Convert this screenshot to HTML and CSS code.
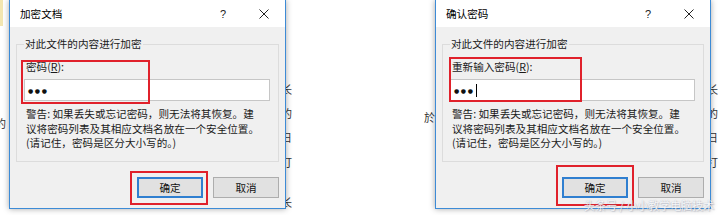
FILE: index.html
```html
<!DOCTYPE html>
<html lang="zh-CN">
<head>
<meta charset="utf-8">
<title>加密文档</title>
<link rel="stylesheet" href="styles.css">
</head>
<body>
<div class="page">
  <div class="yellow"></div>
  <span class="bgch c-left">的</span>
  <div class="bgcol col1"><span>长</span><span>的</span><span>日</span><span>打</span><span>长</span></div>
  <span class="bgch c-mid">於</span>
  <div class="bgcol col2"><span>长</span><span>的</span><span>日</span><span>打</span></div>

  <div class="dialog">
    <div class="titlebar">
      <span class="title">加密文档</span>
      <span class="help">?</span>
      <svg class="close" width="10" height="10" viewBox="0 0 10 10"><path d="M0.5 0.5 L9.5 9.5 M9.5 0.5 L0.5 9.5" stroke="#222" stroke-width="1" fill="none"/></svg>
    </div>
    <div class="body">
      <fieldset class="group">
        <legend>对此文件的内容进行加密</legend>
        <label class="lbl">密码(<u>R</u>):</label>
        <div class="input"><span class="dots">●●●</span></div>
        <p class="warn">警告: 如果丢失或忘记密码，则无法将其恢复。建<br>议将密码列表及其相应文档名放在一个安全位置。<br>(请记住，密码是区分大小写的。)</p>
      </fieldset>
      <div class="buttons">
        <div class="btn primary">确定</div>
        <div class="btn">取消</div>
      </div>
    </div>
    <div class="redbox a1"></div>
    <div class="redbox b1"></div>
  </div>

  <div class="dialog d2">
    <div class="titlebar">
      <span class="title">确认密码</span>
      <span class="help">?</span>
      <svg class="close" width="10" height="10" viewBox="0 0 10 10"><path d="M0.5 0.5 L9.5 9.5 M9.5 0.5 L0.5 9.5" stroke="#222" stroke-width="1" fill="none"/></svg>
    </div>
    <div class="body">
      <fieldset class="group">
        <legend>对此文件的内容进行加密</legend>
        <label class="lbl">重新输入密码(<u>R</u>):</label>
        <div class="input"><span class="dots">●●●</span><span class="caret"></span></div>
        <p class="warn">警告: 如果丢失或忘记密码，则无法将其恢复。建<br>议将密码列表及其相应文档名放在一个安全位置。<br>(请记住，密码是区分大小写的。)</p>
      </fieldset>
      <div class="buttons">
        <div class="btn primary">确定</div>
        <div class="btn">取消</div>
      </div>
    </div>
    <div class="redbox a2"></div>
    <div class="redbox b2"></div>
    <div class="watermark">头条号 / 小小教学电脑技术</div>
  </div>
</div>
</body>
</html>
```

FILE: styles.css
```css
* { box-sizing: border-box; }
html, body { margin: 0; padding: 0; background: #fff; }
body {
  width: 720px;
  height: 215px;
  overflow: hidden;
  font-family: "Noto Sans CJK SC", "Noto Sans", sans-serif;
  font-size: 10.6px;
  color: #1a1a1a;
}
.page {
  position: relative;
  display: flex;
  gap: 149px;
  padding-left: 9px;
  height: 215px;
}
.yellow {
  position: absolute;
  left: 0; top: 0;
  width: 3px; height: 26px;
  background: #f3e6b0;
}
.bgch {
  position: absolute;
  font-size: 11px;
  line-height: 14px;
  color: #333;
}
.c-left { left: -5px; top: 116px; }
.c-mid { left: 424px; top: 110px; }
.bgcol {
  position: absolute;
  top: 82px;
  display: flex;
  flex-direction: column;
  font-size: 11px;
  line-height: 14px;
  color: #333;
}
.bgcol span:nth-child(2) { margin-top: 10px; }
.bgcol span:nth-child(3) { margin-top: 10px; }
.bgcol span:nth-child(4) { margin-top: 11px; }
.bgcol span:nth-child(5) { margin-top: 26px; }
.col1 { left: 281px; }
.col2 { left: 707px; }

.dialog {
  position: relative;
  z-index: 1;
  width: 277px;
  height: 209px;
  border: 1px solid #3d8bd6;
  border-top: none;
  background: #f0f0f0;
  box-shadow: 0 0 6px rgba(0,0,0,0.35);
  display: flex;
  flex-direction: column;
}
.d2 { width: 276px; }
.titlebar {
  height: 27px;
  background: #fff;
  display: flex;
  align-items: center;
  padding-left: 10px;
  padding-right: 16px;
  flex: none;
}
.title { color: #000; line-height: 14px; }
.help {
  margin-left: auto;
  margin-right: 33px;
  font-family: "Liberation Sans", sans-serif;
  font-size: 11px;
  color: #222;
}
.close { display: block; }

.body {
  padding: 10px 6px 0 6px;
  display: flex;
  flex-direction: column;
}
.group {
  margin: 0;
  border: 1px solid #dcdcdc;
  padding: 0 8px 10px 7px;
  min-width: 0;
}
.group legend {
  padding: 0 1px;
  line-height: 14px;
  color: #1a1a1a;
}
.lbl {
  display: block;
  margin: 9px 0 0 2px;
  line-height: 14px;
}
.lbl u { text-decoration: underline; text-underline-offset: 1px; }
.input {
  margin-top: 5px;
  height: 22px;
  background: #fff;
  border: 1px solid #c6c6c6;
  display: flex;
  align-items: center;
  padding-left: 3px;
}
.dots {
  font-family: "DejaVu Sans", sans-serif;
  font-size: 6px;
  letter-spacing: 1.6px;
  color: #111;
}
.caret {
  width: 1px;
  height: 13px;
  background: #000;
  margin-left: 1px;
}
.warn {
  margin: 6px 0 0 2px;
  line-height: 14.5px;
  color: #1a1a1a;
  white-space: nowrap;
}
.buttons {
  margin-top: 15px;
  display: flex;
  justify-content: flex-end;
  gap: 10px;
}
.btn {
  width: 66px;
  height: 21px;
  border: 1px solid #adadad;
  background: #e1e1e1;
  display: flex;
  align-items: center;
  justify-content: center;
  color: #111;
}
.btn.primary {
  border: 2px solid #2f7fd0;
}

.redbox {
  position: absolute;
  border: 2px solid #e0212b;
}
.a1 { left: 11px; top: 60px; width: 129px; height: 44px; }
.b1 { left: 120px; top: 171px; width: 78px; height: 34px; }
.a2 { left: 13px; top: 57px; width: 133px; height: 45px; }
.b2 { left: 120px; top: 165px; width: 78px; height: 41px; }

.watermark {
  position: absolute;
  left: 148px;
  top: 198px;
  font-size: 11px;
  line-height: 14px;
  white-space: nowrap;
  color: rgba(255,255,255,0.9);
  text-shadow: 0 0 1px rgba(90,100,130,0.45), 1px 1px 1px rgba(90,100,130,0.25);
  z-index: 3;
}
```
